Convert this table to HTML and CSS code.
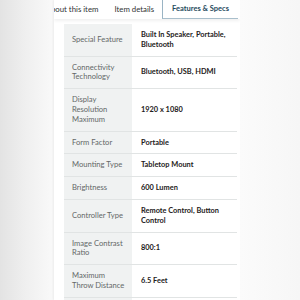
FILE: index.html
```html
<!DOCTYPE html>
<html lang="en">
<head>
  <meta charset="UTF-8" />
  <meta name="viewport" content="width=device-width, initial-scale=1.0"/>
  <title>Features &amp; Specs</title>
  <link rel="stylesheet" href="styles.css">
</head>
<body>

  <div class="panel">
    <div class="tabs">
      <div class="tab">About this item</div>
      <div class="tab">Item details</div>
      <div class="tab active">Features &amp; Specs</div>
    </div>

    <table class="specs">
      <tbody>
        <tr>
          <th>Special Feature</th>
          <td>Built In Speaker, Portable, Bluetooth</td>
        </tr>
        <tr>
          <th>Connectivity Technology</th>
          <td>Bluetooth, USB, HDMI</td>
        </tr>
        <tr>
          <th>Display Resolution Maximum</th>
          <td>1920 x 1080</td>
        </tr>
        <tr>
          <th>Form Factor</th>
          <td>Portable</td>
        </tr>
        <tr>
          <th>Mounting Type</th>
          <td>Tabletop Mount</td>
        </tr>
        <tr>
          <th>Brightness</th>
          <td>600 Lumen</td>
        </tr>
        <tr>
          <th>Controller Type</th>
          <td>Remote Control, Button Control</td>
        </tr>
        <tr>
          <th>Image Contrast Ratio</th>
          <td>800:1</td>
        </tr>
        <tr>
          <th>Maximum Throw Distance</th>
          <td>6.5 Feet</td>
        </tr>
        <tr>
          <th>Throw Ratio</th>
          <td>1.2:1</td>
        </tr>
      </tbody>
    </table>
  </div>

</body>
</html>
```

FILE: styles.css
```css
body {
  margin: 0;
  padding: 0;
  height: 300px;
  overflow: hidden;
  font-family: Lato, "Noto Sans", sans-serif;
  background: linear-gradient(to right, #e3e3e3 0, #efefef 25px, #f8f8f8 50px, #fbfbfb 240px, #f6f6f6 300px);
}

.panel {
  margin-left: 54px;
  width: 186px;
  height: 300px;
  background-color: #ffffff;
  box-shadow: -1px 0 2px rgba(0, 0, 0, 0.05);
  overflow: hidden;
}

.tabs {
  display: flex;
  justify-content: flex-end;
  padding-right: 2px;
  height: 19px;
  box-shadow: 0 2px 3px rgba(0, 0, 0, 0.06);
  white-space: nowrap;
}

.tab {
  flex-shrink: 0;
  padding: 0 8px;
  font-size: 7.8px;
  line-height: 18px;
  font-weight: 400;
  color: #2f3333;
}

.tab.active {
  padding: 0 9px;
  font-size: 7.5px;
  color: #254a5d;
  font-weight: 700;
  border-left: 1px solid #9ab4c4;
  border-bottom: 1px solid #a9bfcc;
}

.specs {
  margin: 5px 0 0 10px;
  width: 173px;
  table-layout: fixed;
  border-collapse: collapse;
  font-size: 7.6px;
  line-height: 9.8px;
}

.specs th, .specs td {
  box-sizing: border-box;
  padding: 6px 3px 6px 8px;
  text-align: left;
  vertical-align: middle;
  border-bottom: 1px solid #e1e4e4;
}

.specs th {
  width: 68px;
  padding-right: 7px;
  background-color: #f0f2f2;
  font-weight: 400;
  color: #646868;
}

.specs td {
  padding-left: 9px;
  font-size: 7.4px;
  font-weight: 700;
  color: #1d2020;
}
```
